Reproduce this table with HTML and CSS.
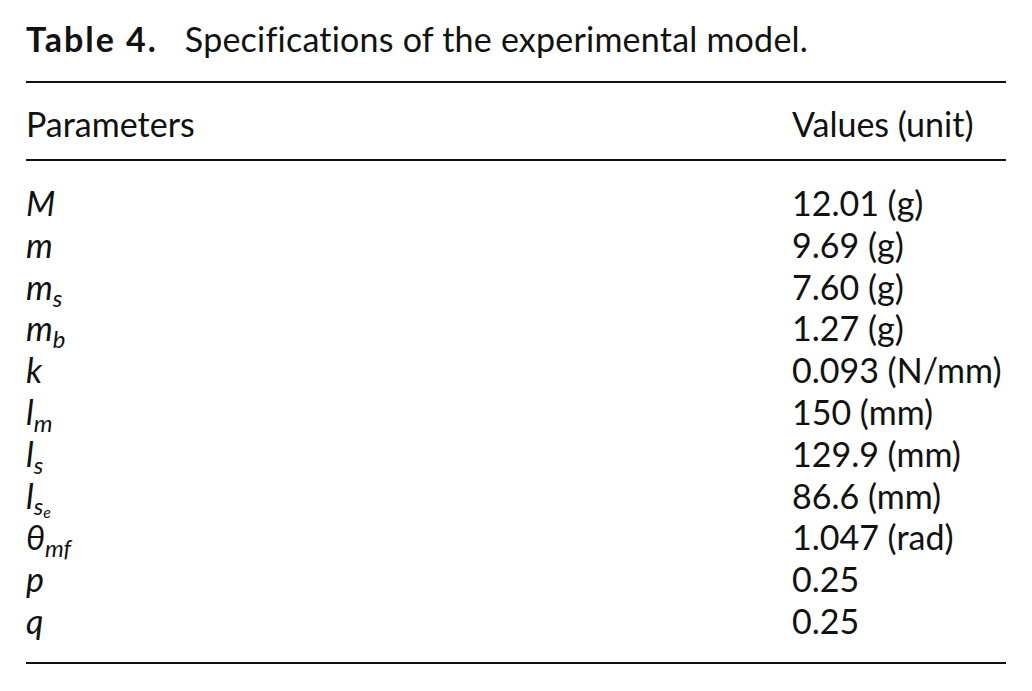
FILE: index.html
```html
<!DOCTYPE html>
<html>
<head>
<meta charset="utf-8">
<link rel="stylesheet" href="styles.css">
</head>
<body>
<div class="page">
  <p class="caption"><span class="label">Table 4.</span>Specifications of the experimental model.</p>
  <table class="spec">
    <thead>
      <tr><th class="col-param">Parameters</th><th class="col-value">Values (unit)</th></tr>
    </thead>
    <tbody>
      <tr class="first"><td><i>M</i></td><td>12.01 (g)</td></tr>
      <tr><td><i>m</i></td><td>9.69 (g)</td></tr>
      <tr><td><i>m<sub>s</sub></i></td><td>7.60 (g)</td></tr>
      <tr><td><i>m<sub>b</sub></i></td><td>1.27 (g)</td></tr>
      <tr><td><i>k</i></td><td>0.093 (N/mm)</td></tr>
      <tr><td><i>l<sub>m</sub></i></td><td>150 (mm)</td></tr>
      <tr><td><i>l<sub>s</sub></i></td><td>129.9 (mm)</td></tr>
      <tr><td><i>l<sub>s<sub class="sub2">e</sub></sub></i></td><td>86.6 (mm)</td></tr>
      <tr><td><i>θ<sub>mf</sub></i></td><td>1.047 (rad)</td></tr>
      <tr><td><i>p</i></td><td>0.25</td></tr>
      <tr class="last"><td><i>q</i></td><td>0.25</td></tr>
    </tbody>
  </table>
</div>
</body>
</html>
```

FILE: styles.css
```css
html, body {
  margin: 0;
  padding: 0;
  background: #ffffff;
}
body {
  font-family: Lato, "Open Sans", "Noto Sans", sans-serif;
  color: #111111;
  font-size: 34px;
}
.page {
  padding: 19px 26px 0 26px;
  width: 980px;
}
.caption {
  margin: 0 0 22px 0;
  line-height: 40px;
  white-space: nowrap;
  letter-spacing: 0.22px;
}
.label {
  font-weight: 700;
  letter-spacing: 2px;
  margin-right: 27px;
}
.spec {
  width: 980px;
  border-collapse: collapse;
  border-top: 2px solid #111;
  border-bottom: 2px solid #111;
}
.spec th {
  font-weight: 400;
  text-align: left;
  line-height: 40px;
  padding: 21px 0 15px 0;
  border-bottom: 2px solid #111;
}
.col-param {
  width: 766px;
}
.spec td {
  padding: 0;
  line-height: 41.8px;
  vertical-align: baseline;
  white-space: nowrap;
}
.spec tr.first td {
  padding-top: 21px;
}
.spec tr.last td {
  padding-bottom: 20px;
}
.spec i {
  font-style: italic;
}
.spec sub {
  font-size: 0.7em;
  line-height: 0;
  vertical-align: -0.28em;
}
.spec sub.sub2 {
  font-size: 0.66em;
  vertical-align: -0.22em;
}
```
